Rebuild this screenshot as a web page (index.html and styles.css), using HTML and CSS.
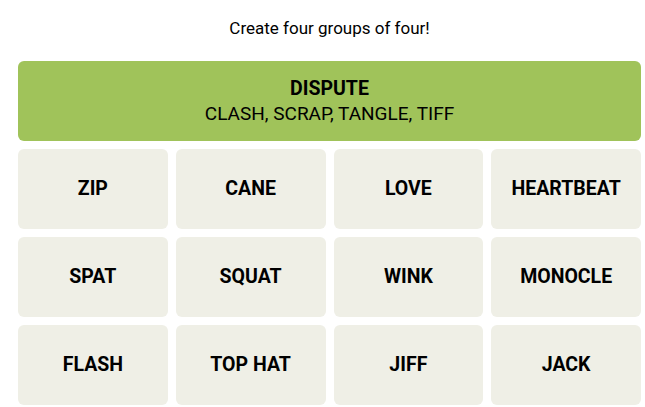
FILE: index.html
```html
<!DOCTYPE html>
<html>
<head>
<meta charset="utf-8">
<link rel="stylesheet" href="styles.css">
</head>
<body>
<div class="game">
  <p class="prompt">Create four groups of four!</p>
  <div class="board">
    <div class="solved">
      <div class="solved-title">DISPUTE</div>
      <div class="solved-words">CLASH, SCRAP, TANGLE, TIFF</div>
    </div>
    <div class="grid">
      <div class="card">ZIP</div>
      <div class="card">CANE</div>
      <div class="card">LOVE</div>
      <div class="card">HEARTBEAT</div>
      <div class="card">SPAT</div>
      <div class="card">SQUAT</div>
      <div class="card">WINK</div>
      <div class="card">MONOCLE</div>
      <div class="card">FLASH</div>
      <div class="card">TOP HAT</div>
      <div class="card">JIFF</div>
      <div class="card">JACK</div>
    </div>
  </div>
</div>
</body>
</html>
```
FILE: styles.css
```css
html, body {
  margin: 0;
  padding: 0;
  background: #ffffff;
}
body {
  font-family: Roboto, "Liberation Sans", sans-serif;
  color: #000;
}
.game {
  width: 623px;
  margin-left: 18px;
  padding-top: 18px;
}
.prompt {
  margin: 0;
  height: 20px;
  line-height: 20px;
  font-size: 17px;
  text-align: center;
}
.board {
  margin-top: 23px;
  display: flex;
  flex-direction: column;
  gap: 8px;
}
.solved {
  height: 80px;
  background: #a0c35a;
  border-radius: 6px;
  display: flex;
  flex-direction: column;
  align-items: center;
  justify-content: center;
}
.solved-title {
  font-weight: 700;
  font-size: 19.5px;
  line-height: 24px;
}
.solved-words {
  font-size: 19px;
  line-height: 25px;
}
.grid {
  display: grid;
  grid-template-columns: repeat(4, 1fr);
  grid-auto-rows: 80px;
  gap: 8px;
}
.card {
  background: #efefe6;
  border-radius: 6px;
  display: flex;
  align-items: center;
  justify-content: center;
  font-weight: 700;
  font-size: 19.5px;
  padding-bottom: 1px;
}
```
